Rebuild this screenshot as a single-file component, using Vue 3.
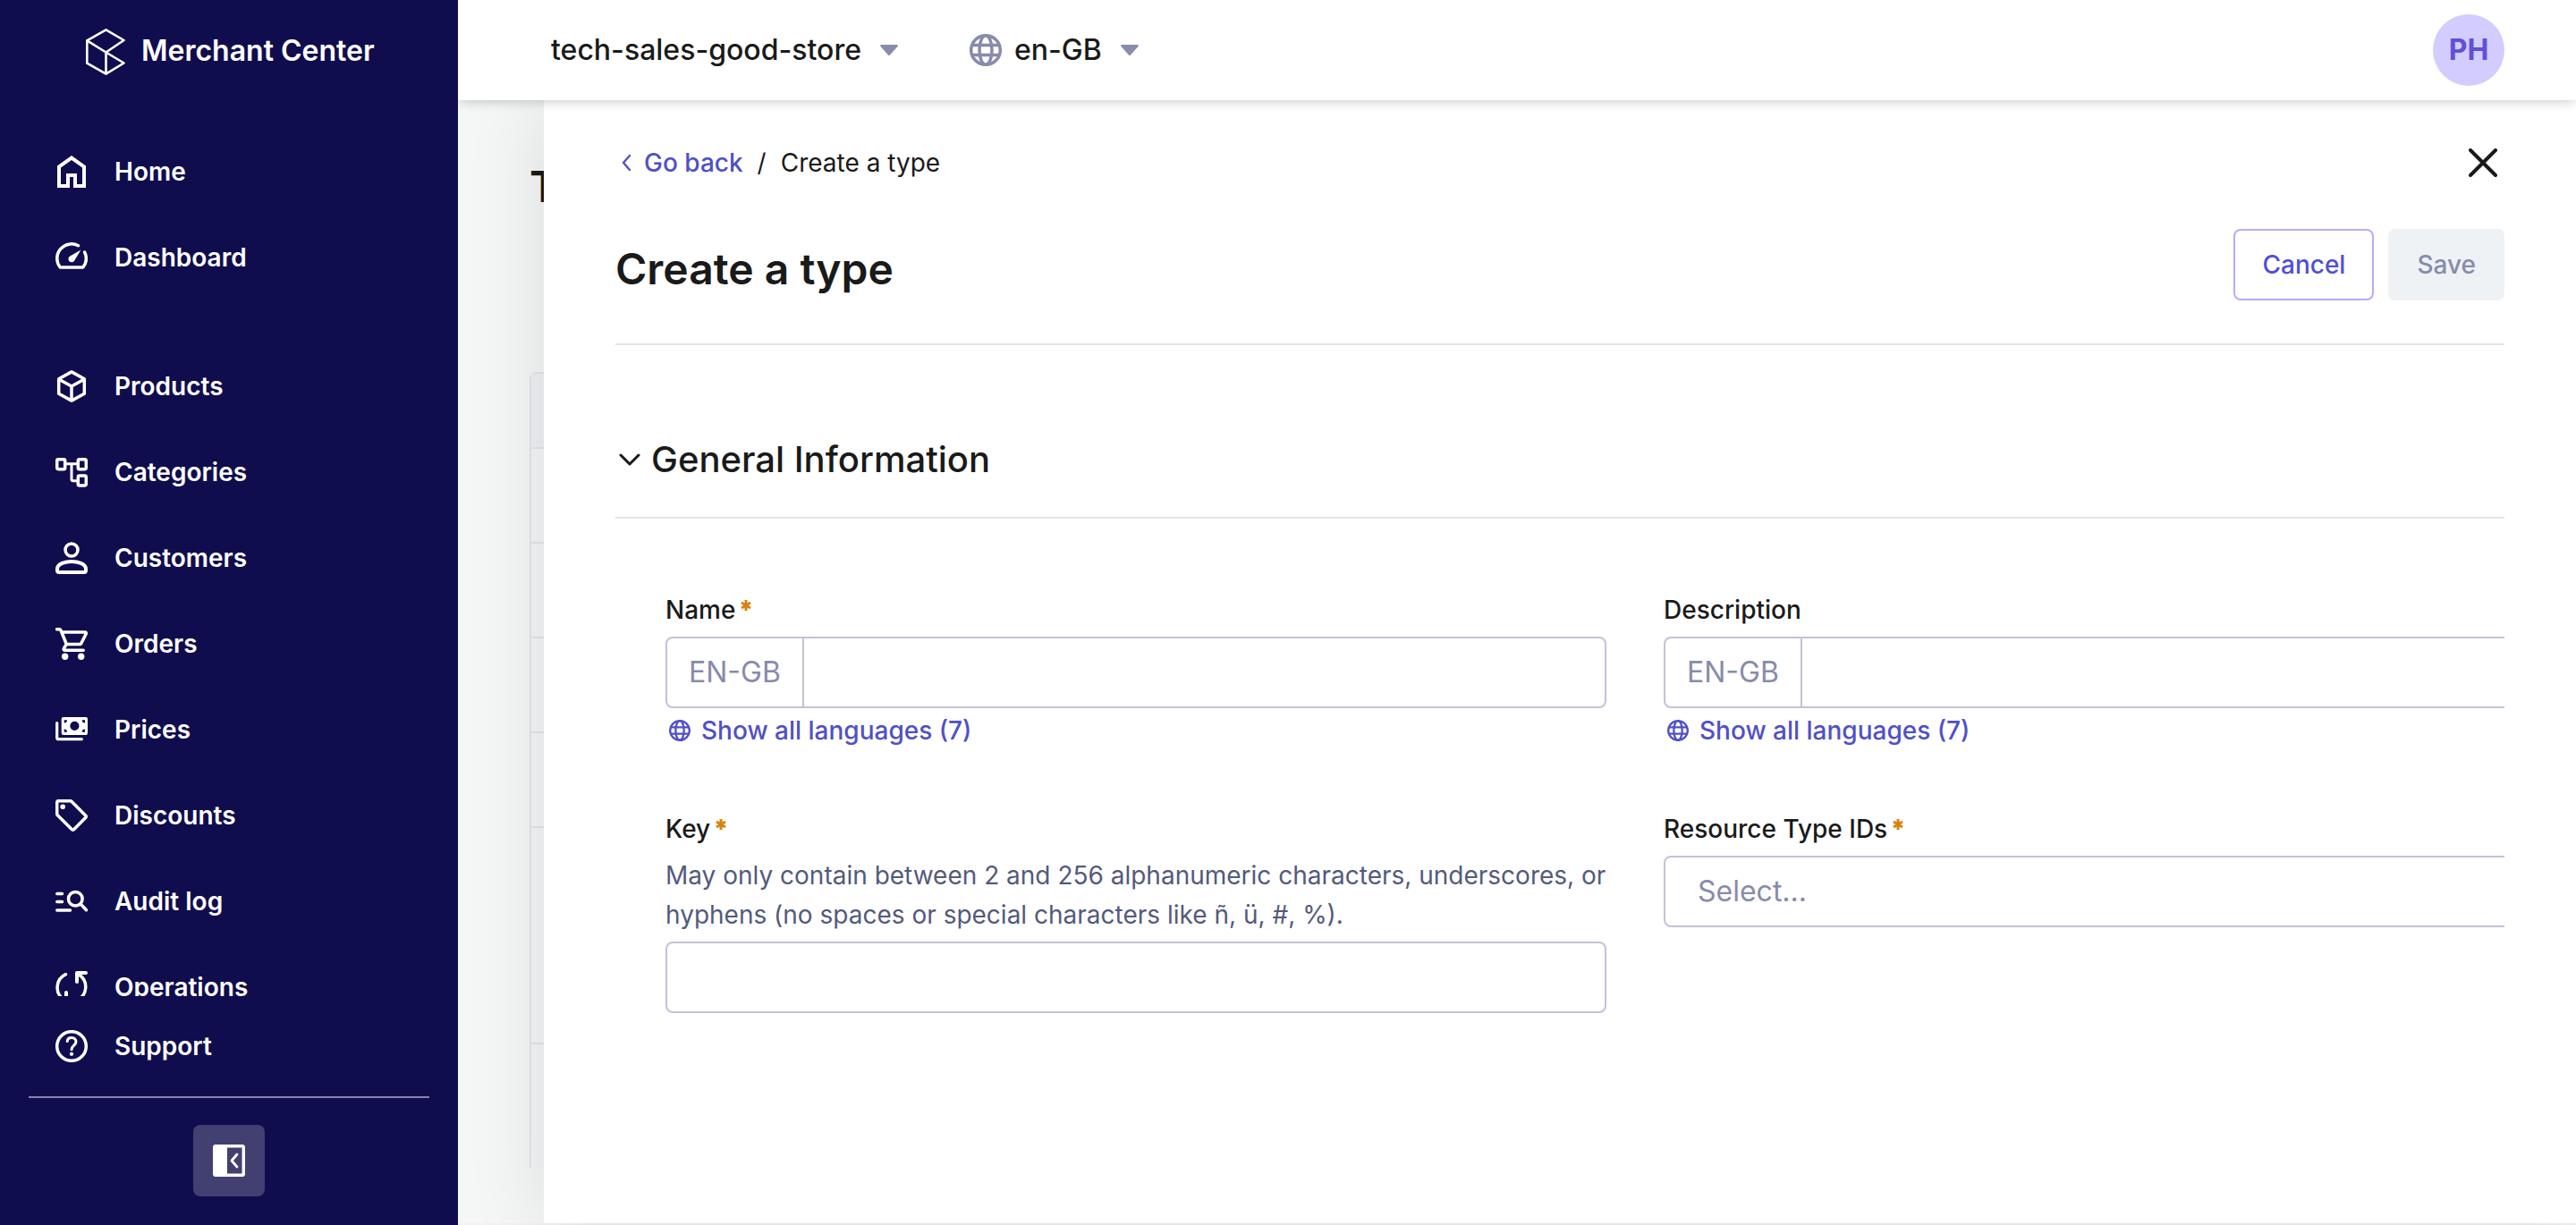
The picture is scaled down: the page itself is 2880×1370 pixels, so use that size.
<script setup>
import { ref } from 'vue'

const mainLinks = [
  { id: 'home', label: 'Home' },
  { id: 'dashboard', label: 'Dashboard' },
]
const navLinks = [
  { id: 'products', label: 'Products' },
  { id: 'categories', label: 'Categories' },
  { id: 'customers', label: 'Customers' },
  { id: 'orders', label: 'Orders' },
  { id: 'prices', label: 'Prices' },
  { id: 'discounts', label: 'Discounts' },
  { id: 'audit', label: 'Audit log' },
  { id: 'operations', label: 'Operations' },
]

// Icon markup, drawn on a 36 x 36 grid. Strokes default to 3.5 with round joins.
const icons = {
  home: '<path fill="currentColor" stroke="none" fill-rule="evenodd" d="M2 36V11.500L18 0l16 11.500V36H20V24h-4v12zM6 32h6V20h12v12h6V13.500L18 5 6 13.500z"/>',
  dashboard: '<path d="M25.500 4.700A16.200 16.200 0 0 0 5.200 29H30.800A16.200 16.200 0 0 0 32.600 12"/><path fill="currentColor" stroke="none" d="M28.400 9.600 21.200 21.400A3.600 3.600 0 1 1 16.200 16.600z"/>',
  products: '<path d="M18 1.900 32.300 9.800V26.200L18 34.100 3.700 26.200V9.800zM4 10.300l14 7.700 14-7.700M18 18v15.500"/>',
  categories: '<rect x="1.700" y="3.700" width="9" height="11" rx="1.500"/><rect x="25.300" y="3.700" width="9" height="11" rx="1.500"/><rect x="25.300" y="21.900" width="9" height="11" rx="1.500"/><path stroke-width="3" d="M11 8.700h14M18 8.700v17.300q0 1.800 1.800 1.800H25"/>',
  customers: '<circle cx="18" cy="9" r="7"/><path stroke-width="4" d="M2 30.500C2 24.300 11.500 22 18 22s16 2.300 16 8.500V32q0 2-2 2H4q-2 0-2-2z"/>',
  orders: '<path d="M1.500 1.700H4q1.500 0 2.300 1.800L12.300 18.500H27q1.200 0 1.800-1L34 7.300q1.200-2.300-1.300-2.300H7.500M12.300 18.500 9.500 23q-1 2.300 1.500 2.300H31.200"/><circle cx="10.700" cy="32.300" r="3.700" fill="currentColor" stroke="none"/><circle cx="28.700" cy="32.300" r="3.700" fill="currentColor" stroke="none"/>',
  prices: '<path fill="currentColor" stroke="none" fill-rule="evenodd" d="M9 4h25q2 0 2 2v16q0 2-2 2H9q-2.300 0-2.300-2V6Q6.700 4 9 4zM21.400 8.700a5.100 5.100 0 1 0 0 10.200 5.100 5.100 0 0 0 0-10.200zM9.700 7.300v3.300q3.300 0 3.300-3.300zM33 7.300h-3.300q0 3.300 3.300 3.300zM9.700 20.700H13q0-3.300-3.300-3.300zM33 20.700v-3.300q-3.300 0-3.300 3.300z"/><path stroke-width="3.200" d="M1.700 10.500v16.400q0 1.800 1.800 1.800H29.300"/>',
  discounts: '<path d="M3.500 1.700H16.500q1 0 1.700.7L33.600 18q1.200 1.300 0 2.600L20.800 33.500q-1.300 1.200-2.600 0L2.400 17.700q-.7-.7-.7-1.700V3.500q0-1.800 1.800-1.800z"/><circle cx="8.200" cy="8.200" r="2.800" fill="currentColor" stroke="none"/>',
  audit: '<path d="M1.800 9.500H7.500M1.800 18.600H7.500M1.800 28H16.500M28.500 21.500l6 6.200"/><circle cx="22.300" cy="15.300" r="7.800"/>',
  operations: '<path d="M11.500 3.700A16.200 16.200 0 0 0 8.500 31.300M24.500 32.300A16.200 16.200 0 0 0 27 4.500"/><path stroke-width="4" d="M34 2H24v10M2 34H12V24"/>',
  support: '<circle cx="18" cy="18" r="16.300"/><path stroke-width="3" d="M13.200 12.500C13.500 9.800 15.500 8.500 18 8.500c3 0 5 1.900 5 4.500 0 4-5 4.200-5 8.800"/><circle cx="18" cy="26.800" r="2.100" fill="currentColor" stroke="none"/>',
  collapse: '<rect x="1.700" y="1.700" width="32.600" height="32.600" rx="1.500"/><path fill="currentColor" stroke="none" d="M1 1h15v34H1z"/><path stroke-width="2.800" d="M27 11l-6 7 6 7"/>',
  globe: '<circle cx="18" cy="18" r="16.300"/><ellipse cx="18" cy="18" rx="7" ry="16.300"/><path d="M3 12.500h30M3 23.500h30"/>',
}

const name = ref('')
const description = ref('')
const key = ref('')
const resourceType = ref('')
const project = ref('tech-sales-good-store')
const locale = ref('en-GB')
</script>

<template>
  <div class="app">
    <aside class="sidebar">
      <div class="brand">
        <svg class="brand-mark" viewBox="0 0 44 52" aria-hidden="true">
          <path d="M22.500 1.300 42.500 13 22.500 26.500 1.300 13.300zM1.300 13.300V38.700L22.500 50.700 42.500 38.500 22.500 26.500V50.700" />
        </svg>
        <span>Merchant Center</span>
      </div>
      <nav class="nav" aria-label="Main">
        <ul class="nav-group">
          <li v-for="link in mainLinks" :key="link.id">
            <a class="nav-link" href="#">
              <svg class="icon" viewBox="0 0 36 36" aria-hidden="true" v-html="icons[link.id]"></svg>
              {{ link.label }}
            </a>
          </li>
        </ul>
        <ul class="nav-group">
          <li v-for="link in navLinks" :key="link.id">
            <a class="nav-link" href="#">
              <svg class="icon" viewBox="0 0 36 36" aria-hidden="true" v-html="icons[link.id]"></svg>
              {{ link.label }}
            </a>
          </li>
        </ul>
      </nav>
      <div class="sidebar-foot">
        <a class="nav-link" href="#">
          <svg class="icon" viewBox="0 0 36 36" aria-hidden="true" v-html="icons.support"></svg>
          Support
        </a>
        <hr class="foot-rule" />
        <button class="collapse" type="button" aria-label="Collapse menu">
          <svg class="icon" viewBox="0 0 36 36" aria-hidden="true" v-html="icons.collapse"></svg>
        </button>
      </div>
    </aside>

    <header class="topbar">
      <label class="picker">
        <select v-model="project" aria-label="Project">
          <option>tech-sales-good-store</option>
        </select>
        <svg class="caret" viewBox="0 0 20 12" aria-hidden="true"><path d="M1 0h18q1.500.5.500 2L11 11.500q-1 1-2 0L.5 2Q-.5.500 1 0z" /></svg>
      </label>
      <label class="picker">
        <svg class="icon globe" viewBox="0 0 36 36" aria-hidden="true" v-html="icons.globe"></svg>
        <select v-model="locale" aria-label="Locale">
          <option>en-GB</option>
        </select>
        <svg class="caret" viewBox="0 0 20 12" aria-hidden="true"><path d="M1 0h18q1.500.5.500 2L11 11.500q-1 1-2 0L.5 2Q-.5.500 1 0z" /></svg>
      </label>
      <button class="avatar" type="button">PH</button>
    </header>

    <div class="stage">
      <div class="list-page" aria-hidden="true">
        <h1>Types</h1>
        <div class="list">
          <div class="list-head"></div>
          <div class="list-row"></div>
          <div class="list-row"></div>
          <div class="list-row"></div>
          <div class="list-row"></div>
          <div class="list-row tall"></div>
          <div class="list-row last"></div>
        </div>
      </div>

      <main class="panel">
        <div class="crumbs">
          <a class="back" href="#">
            <svg viewBox="0 0 12 20" aria-hidden="true"><path d="M10 2 3 10l7 8" /></svg>
            Go back
          </a>
          <span>/</span>
          <span>Create a type</span>
          <button class="close" type="button" aria-label="Close">
            <svg viewBox="0 0 32 32" aria-hidden="true"><path d="M2 2l28 28M30 2 2 30" /></svg>
          </button>
        </div>

        <div class="title-row">
          <h1>Create a type</h1>
          <div class="actions">
            <button class="btn secondary" type="button">Cancel</button>
            <button class="btn primary" type="submit" form="type-form" disabled>Save</button>
          </div>
        </div>

        <section class="section">
          <h2>
            <button class="toggle" type="button" aria-expanded="true">
              <svg viewBox="0 0 24 14" aria-hidden="true"><path d="M2 2l10 10L22 2" /></svg>
              General Information
            </button>
          </h2>
          <form id="type-form" class="fields" @submit.prevent>
            <div class="field">
              <label for="name">Name<svg class="req" viewBox="0 0 12 12" aria-hidden="true"><path d="M6 0v12M1 3l10 6M11 3 1 9" /></svg></label>
              <div class="localized">
                <span class="lang">EN-GB</span>
                <input id="name" v-model="name" type="text" required />
              </div>
              <button class="show-all" type="button">
                <svg class="icon small" viewBox="0 0 36 36" aria-hidden="true" v-html="icons.globe"></svg>
                Show all languages (7)
              </button>
            </div>
            <div class="field">
              <label for="description">Description</label>
              <div class="localized">
                <span class="lang">EN-GB</span>
                <input id="description" v-model="description" type="text" />
              </div>
              <button class="show-all" type="button">
                <svg class="icon small" viewBox="0 0 36 36" aria-hidden="true" v-html="icons.globe"></svg>
                Show all languages (7)
              </button>
            </div>
            <div class="field">
              <label for="key">Key<svg class="req" viewBox="0 0 12 12" aria-hidden="true"><path d="M6 0v12M1 3l10 6M11 3 1 9" /></svg></label>
              <p id="key-hint" class="hint">May only contain between 2 and 256 alphanumeric characters, underscores, or hyphens (no spaces or special characters like ñ, ü, #, %).</p>
              <input id="key" v-model="key" class="control" type="text" aria-describedby="key-hint" required />
            </div>
            <div class="field">
              <label for="resource">Resource Type IDs<svg class="req" viewBox="0 0 12 12" aria-hidden="true"><path d="M6 0v12M1 3l10 6M11 3 1 9" /></svg></label>
              <select id="resource" v-model="resourceType" class="control placeholder" required>
                <option value="">Select...</option>
              </select>
            </div>
          </form>
        </section>
      </main>
    </div>
  </div>
</template>

<style>
body {
  margin: 0;
  background: #f2f2f2;
}
</style>

<style scoped>
.app {
  --ink: #1a1a1a;
  --muted: #878bac;
  --link: #5050c8;
  --line: #e3e3ea;
  --field-line: #c2c3d8;
  display: grid;
  grid-template: auto minmax(0, 1fr) / 512px minmax(0, 1fr);
  height: 100vh;
  overflow: hidden;
  color: var(--ink);
  font-family: Inter, "Liberation Sans", sans-serif;
  font-size: 28px;
  line-height: 44px;
}
*,
*::before,
*::after {
  box-sizing: border-box;
}
button,
input,
select {
  margin: 0;
  padding: 0;
  border: 0;
  background: none;
  color: inherit;
  font: inherit;
}
select {
  appearance: none;
}
a {
  color: inherit;
  text-decoration: none;
}
h1,
h2,
p {
  margin: 0;
}
h1 {
  font-size: 48px;
  font-weight: 600;
  line-height: 58px;
}
svg {
  display: block;
  flex: none;
  fill: none;
  stroke: currentColor;
  stroke-linecap: round;
  stroke-linejoin: round;
}
.icon {
  width: 36px;
  height: 36px;
  stroke-width: 3.5;
}

/* Sidebar */
.sidebar {
  grid-row: 1 / 3;
  display: flex;
  flex-direction: column;
  min-height: 0;
  background: #100d4e;
  color: #fff;
  z-index: 3;
}
.brand {
  display: flex;
  flex: none;
  align-items: center;
  gap: 18px;
  height: 112px;
  padding: 4px 0 0 96px;
  font-size: 32px;
  font-weight: 600;
}
.brand span {
  padding-bottom: 2px;
}
.brand-mark {
  width: 44px;
  height: 52px;
  stroke-width: 2.6;
}
.nav {
  flex: 1;
  min-height: 0;
  padding-top: 32px;
  overflow: hidden;
}
.nav-group {
  margin: 0 0 48px;
  padding: 0;
  list-style: none;
}
.nav-link {
  display: flex;
  align-items: center;
  gap: 30px;
  height: 96px;
  padding-left: 62px;
  font-weight: 600;
}
.sidebar-foot {
  flex: none;
  padding: 8px 32px 32px;
}
.sidebar-foot .nav-link {
  padding-left: 30px;
}
.foot-rule {
  height: 2px;
  margin: 8px 0 30px;
  border: 0;
  background: #8783ab;
}
.collapse {
  display: grid;
  place-items: center;
  width: 80px;
  height: 80px;
  margin: 0 auto;
  border-radius: 8px;
  background: #423f71;
}

/* Top bar */
.topbar {
  display: flex;
  align-items: center;
  height: 112px;
  padding: 0 80px 0 104px;
  background: #fff;
  box-shadow: 0 4px 12px -2px rgba(0, 0, 0, 0.2);
  font-size: 32px;
  font-weight: 500;
  z-index: 2;
}
.picker {
  display: flex;
  align-items: center;
  margin-right: 80px;
}
.caret {
  width: 20px;
  height: 12px;
  margin-left: 21px;
  fill: var(--muted);
  stroke: none;
}
.globe {
  margin-right: 14px;
  color: var(--muted);
}
.avatar {
  width: 80px;
  height: 80px;
  margin-left: auto;
  border-radius: 50%;
  background: #d3ccff;
  color: #6150d8;
  font-weight: 700;
}

/* Page underneath the panel */
.stage {
  position: relative;
  overflow: hidden;
  background: #f2f2f2;
}
.list-page {
  height: calc(100% - 2px);
  padding: 68px 80px 0;
  background: #f5f7f7;
}
.list {
  margin-top: 178px;
  border: 2px solid #e3e5e9;
  border-bottom: 0;
  border-radius: 8px 8px 0 0;
  background: #f5f6f7;
}
.list-head {
  height: 82px;
  background: #f0f1f4;
}
.list-row {
  height: 106px;
  border-top: 2px solid #e3e5e9;
}
.list-row.tall {
  height: 242px;
}
.list-row.last {
  height: 140px;
}

/* Create panel */
.panel {
  position: absolute;
  inset: 0 0 2px 96px;
  padding: 48px 80px 0;
  background: #fff;
  box-shadow: 0 0 84px rgba(0, 0, 0, 0.11);
}
.crumbs {
  display: flex;
  align-items: center;
  gap: 16px;
}
.back {
  display: flex;
  align-items: center;
  gap: 14px;
  padding-left: 6px;
  color: var(--link);
  font-weight: 500;
}
.back svg {
  width: 12px;
  height: 20px;
  stroke-width: 2.4;
}
.close {
  margin-left: auto;
  padding: 0 8px;
}
.close svg {
  width: 32px;
  height: 32px;
  stroke-width: 4;
}
.title-row {
  display: flex;
  align-items: flex-start;
  justify-content: space-between;
  margin-top: 52px;
  padding-bottom: 48px;
  border-bottom: 2px solid var(--line);
}
.title-row h1 {
  padding-top: 16px;
}
.actions {
  display: flex;
  gap: 16px;
}
.btn {
  height: 80px;
  padding: 0 30px;
  border: 2px solid transparent;
  border-radius: 8px;
  font-weight: 500;
}
.secondary {
  border-color: #b2adff;
  color: #4f4fd8;
}
.primary {
  background: #eef2f5;
  color: var(--muted);
}
.section {
  padding-top: 104px;
  overflow: hidden;
}
h2 {
  padding-bottom: 40px;
  border-bottom: 2px solid var(--line);
  font-size: 40px;
  font-weight: 500;
  line-height: 48px;
}
.toggle {
  display: flex;
  align-items: center;
  gap: 12px;
  padding-left: 4px;
}
.toggle svg {
  width: 24px;
  height: 14px;
  stroke-width: 3;
}
/* The grid is indented and keeps the full section width, so its end is cut off by the section */
.fields {
  display: grid;
  grid-template-columns: repeat(2, minmax(0, 1fr));
  gap: 66px 64px;
  align-items: start;
  margin: 80px -112px 0 56px;
  padding: 0;
}
.field {
  display: flex;
  flex-direction: column;
  align-items: stretch;
}
.field label {
  display: flex;
  gap: 6px;
  margin-bottom: 8px;
  font-weight: 500;
}
.req {
  width: 12px;
  height: 12px;
  margin-top: 11px;
  color: #d9820f;
  stroke-width: 3;
  stroke-linecap: butt;
}
.hint {
  margin-bottom: 8px;
  color: #535a7c;
}
.localized,
.control {
  height: 80px;
  border: 2px solid var(--field-line);
  border-radius: 8px;
  background: #fff;
  font-size: 32px;
}
.localized {
  display: flex;
}
.localized input {
  flex: 1;
  min-width: 0;
  padding: 0 24px;
}
.lang {
  display: grid;
  place-items: center;
  padding: 0 24px;
  border-right: 2px solid var(--field-line);
  color: var(--muted);
}
.control {
  width: 100%;
  padding: 0 36px;
}
.placeholder {
  color: var(--muted);
}
.show-all {
  display: flex;
  align-items: center;
  gap: 12px;
  align-self: flex-start;
  margin-top: 3px;
  padding-left: 4px;
  color: var(--link);
  font-weight: 500;
}
.small {
  width: 24px;
  height: 24px;
}
</style>
